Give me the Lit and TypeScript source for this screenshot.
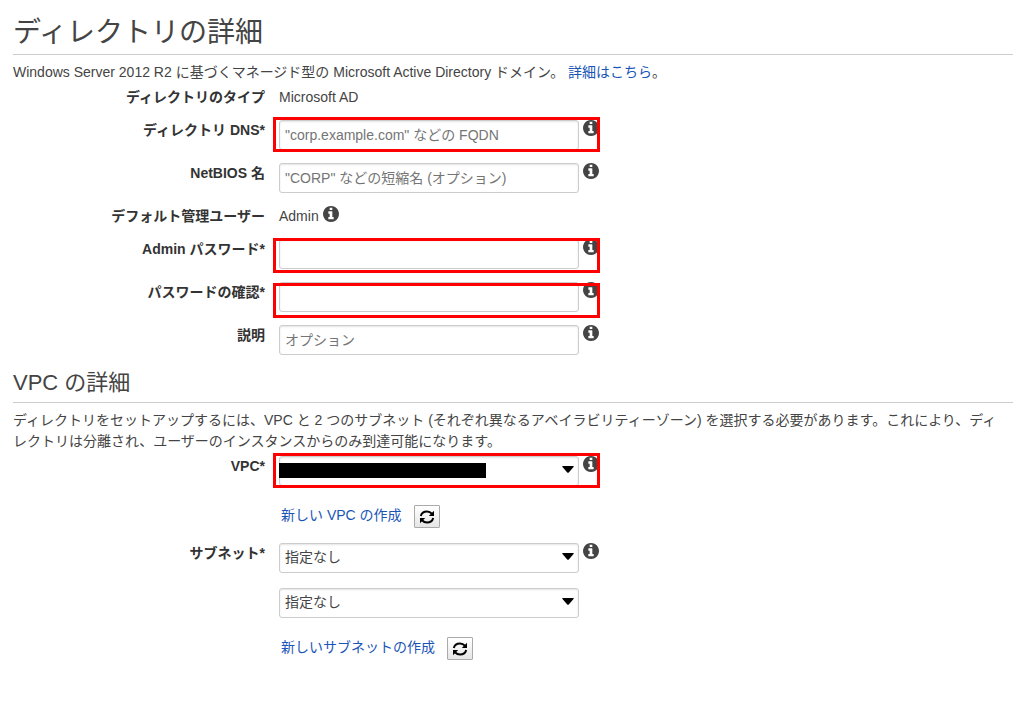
import { LitElement, html, css, svg, nothing } from "lit";
import { customElement } from "lit/decorators.js";

const infoIcon = html`<svg class="info" viewBox="128 128 1536 1536" role="img" aria-label="info">
  ${svg`<path d="M1152 1376v-160q0-14-9-23t-23-9h-96v-512q0-14-9-23t-23-9h-320q-14 0-23 9t-9 23v160q0 14 9 23t23 9h96v320h-96q-14 0-23 9t-9 23v160q0 14 9 23t23 9h448q14 0 23-9t9-23zM1024 480v-160q0-14-9-23t-23-9h-192q-14 0-23 9t-9 23v160q0 14 9 23t23 9h192q14 0 23-9t9-23zM1664 896q0 209-103 385.5t-279.5 279.5-385.5 103-385.5-103-279.5-279.5-103-385.5 103-385.5 279.5-279.5 385.5-103 385.5 103 279.5 279.5 103 385.5z"/>`}
</svg>`;

const refreshIcon = html`<svg class="refresh" viewBox="0 0 16 14" aria-hidden="true">
  ${svg`<path d="M1.800 6C2.500 3.200 5 1.500 8 1.500C10 1.500 11.600 2.300 13 3.800M14.200 8C13.500 10.800 11 12.500 8 12.500C6 12.500 4.400 11.700 3 10.200" fill="none" stroke="#000" stroke-width="2"/>
  <path d="M15 0.800V6H9.800ZM1 13.200V8H6.200Z"/>`}
</svg>`;

const arrow = html`<svg class="arrow" viewBox="0 0 12 7" aria-hidden="true">
  ${svg`<path d="M1 0H11Q12.500 0 11.500 1L7 6.300Q6 7.400 5 6.300L0.500 1Q-0.500 0 1 0Z"/>`}
</svg>`;

type Mark = "above" | "level" | "below";

@customElement("app-root")
export class AppRoot extends LitElement {
  static styles = css`
    :host {
      display: block;
      padding: 13px 14px 40px 13px;
      background: #fff;
      color: #444;
      font: 14px/20px "Liberation Sans", "Noto Sans CJK JP", sans-serif;
    }
    h1, h2, p { margin: 0; }
    h1, h2 {
      font-weight: 400;
      border-bottom: 1px solid #ccc;
    }
    h1 { font-size: 28px; line-height: 40px; padding-bottom: 1px; }
    h2 { font-size: 22px; line-height: 30px; margin-top: 13px; padding-bottom: 4px; }
    p { margin-top: 7px; line-height: 21px; padding-right: 8px; }
    a { color: #1a55b8; text-decoration: none; }
    .rows { display: flex; flex-direction: column; gap: 13px; margin-top: 4px; }
    .rows.wide { gap: 15px; }
    .row {
      display: grid;
      grid-template-columns: 252px minmax(0, 1fr);
      column-gap: 14px;
    }
    .name {
      text-align: right;
      font-weight: 700;
      color: #333;
    }
    .field {
      position: relative;
      display: flex;
      align-items: flex-start;
      gap: 4px;
      justify-self: start;
      max-width: 100%;
    }
    .box { position: relative; width: 300px; }
    input, select {
      display: block;
      box-sizing: border-box;
      width: 100%;
      height: 30px;
      margin: 0;
      padding: 0 5px;
      border: 1px solid #ccc;
      border-radius: 3px;
      background: #fff;
      box-shadow: inset 0 1px 2px #e4e4e4;
      color: #444;
      font: inherit;
      appearance: none;
    }
    select { padding: 0 24px 2px 5px; }
    input::placeholder { color: #757575; opacity: 1; }
    .info { flex: none; width: 16px; height: 16px; fill: #444; }
    .arrow {
      position: absolute;
      right: 5px;
      top: 10px;
      width: 12px;
      height: 7px;
      fill: #000;
      pointer-events: none;
    }
    .redacted {
      position: absolute;
      left: 0;
      top: 7px;
      width: 207px;
      height: 15px;
      background: #000;
    }
    .mark {
      position: absolute;
      left: -6px;
      right: -1px;
      height: 35px;
      box-sizing: border-box;
      border: 3px solid #f00;
      pointer-events: none;
    }
    .above { top: -3px; }
    .level { top: -1px; }
    .below { top: 1px; }
    .create {
      display: flex;
      align-items: flex-start;
      gap: 12px;
      margin: 4px 0 0 268px;
    }
    button {
      display: flex;
      align-items: center;
      justify-content: center;
      box-sizing: border-box;
      width: 26px;
      height: 23px;
      padding: 0;
      border: 1px solid #aaa;
      border-radius: 1px;
      background: linear-gradient(#fff, #e6e6e6);
    }
    .refresh { width: 16px; height: 14px; fill: #000; }
  `;

  private marked(mark?: Mark) {
    return mark ? html`<span class="mark ${mark}"></span>` : nothing;
  }

  private text(id: string, name: string, placeholder = "", type = "text", mark?: Mark) {
    return html`<div class="row">
      <label class="name" for=${id}>${name}</label>
      <div class="field">
        <div class="box"><input id=${id} type=${type} placeholder=${placeholder} /></div>
        ${infoIcon}${this.marked(mark)}
      </div>
    </div>`;
  }

  private create(label: string) {
    return html`<div class="create">
      <a href="#">${label}</a><button type="button" aria-label="更新">${refreshIcon}</button>
    </div>`;
  }

  render() {
    return html`
      <h1>ディレクトリの詳細</h1>
      <p>Windows Server 2012 R2 に基づくマネージド型の Microsoft Active Directory ドメイン。 <a href="#">詳細はこちら</a>。</p>
      <div class="rows">
        <div class="row">
          <span class="name">ディレクトリのタイプ</span>
          <span>Microsoft AD</span>
        </div>
        ${this.text("dns", "ディレクトリ DNS*", '"corp.example.com" などの FQDN', "text", "above")}
        ${this.text("netbios", "NetBIOS 名", '"CORP" などの短縮名 (オプション)')}
        <div class="row">
          <span class="name">デフォルト管理ユーザー</span>
          <div class="field"><span>Admin</span>${infoIcon}</div>
        </div>
        ${this.text("password", "Admin パスワード*", "", "password", "level")}
        ${this.text("confirm", "パスワードの確認*", "", "password", "below")}
        ${this.text("description", "説明", "オプション")}
      </div>

      <h2>VPC の詳細</h2>
      <p>ディレクトリをセットアップするには、VPC と 2 つのサブネット (それぞれ異なるアベイラビリティーゾーン) を選択する必要があります。これにより、ディレクトリは分離され、ユーザーのインスタンスからのみ到達可能になります。</p>
      <div class="rows wide">
        <div class="row">
          <label class="name" for="vpc">VPC*</label>
          <div class="field">
            <div class="box">
              <select id="vpc"><option></option></select>
              <span class="redacted"></span>${arrow}
            </div>
            ${infoIcon}${this.marked("above")}
          </div>
        </div>
        ${this.create("新しい VPC の作成")}
        <div class="row">
          <label class="name" for="subnet1">サブネット*</label>
          <div class="field">
            <div class="box"><select id="subnet1"><option>指定なし</option></select>${arrow}</div>
            ${infoIcon}
          </div>
        </div>
        <div class="row">
          <span></span>
          <div class="field">
            <div class="box"><select id="subnet2" aria-label="サブネット 2"><option>指定なし</option></select>${arrow}</div>
          </div>
        </div>
        ${this.create("新しいサブネットの作成")}
      </div>
    `;
  }
}
